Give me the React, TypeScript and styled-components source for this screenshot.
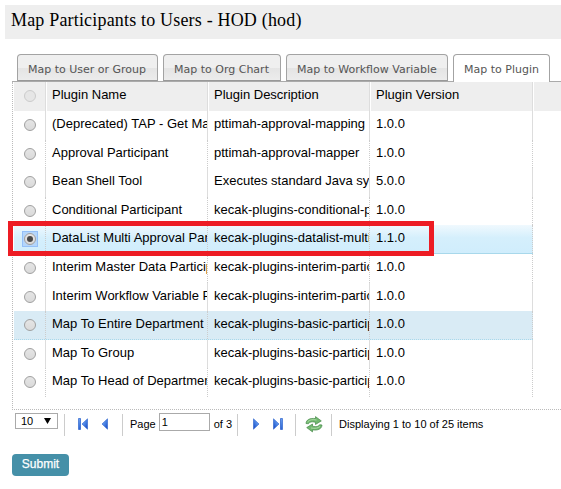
import React from "react";
import styled, { createGlobalStyle, css } from "styled-components";

const GlobalStyle = createGlobalStyle`
  * { box-sizing: border-box; }
  body { margin: 0; background: #fff; overflow: hidden; }
`;

const Page = styled.main`
  width: 561px;
  height: 489px;
  padding-top: 5px;
  background: #fff;
  color: #000;
  font-family: "Liberation Sans", Arial, sans-serif;
  overflow: hidden;
`;

const TitleBar = styled.header`
  height: 34px;
  margin-left: 5px;
  padding-left: 6px;
  background: #eee;
`;

const Title = styled.h1`
  margin: 0;
  font: 400 18px/31px "Liberation Serif", serif;
  letter-spacing: 0.18px;
  white-space: nowrap;
`;

const Tabs = styled.nav`
  display: flex;
  gap: 5px;
  height: 28px;
  margin: 15px 0 0 12px;
  padding-left: 5px;
  border-bottom: 1px solid #aaa;
`;

const Tab = styled.a<{ $width: number; $active?: boolean }>`
  width: ${(p) => p.$width}px;
  height: ${(p) => (p.$active ? 28 : 27)}px;
  padding-left: 10px;
  border: 1px solid #a3a3a3;
  border-bottom: ${(p) => (p.$active ? "0" : "1px solid #999")};
  border-radius: 4px 4px 0 0;
  background: ${(p) =>
    p.$active ? "#fff" : "linear-gradient(#efefef 0 50%, #e4e4e4 52%, #ececec)"};
  color: #555;
  font: 11px/29px "DejaVu Sans", Verdana, sans-serif;
  white-space: nowrap;
`;

const Grid = styled.section`
  position: relative;
  height: 328px;
  margin-left: 12px;
  border-left: 1px dotted #bbb;
  border-bottom: 1px dotted #bbb;
`;

const columns = css`
  display: grid;
  grid-template-columns: 32px 162px 162px 163px 1fr;
`;

const HeaderRow = styled.div`
  ${columns}
  height: 29px;
  margin-left: 1px;
  background: #eee;
`;

const HeaderCell = styled.div`
  padding-left: 6px;
  border-right: 1px solid #ddd;
  box-shadow: 1px 0 #fff;
  font-size: 13px;
  line-height: 26px;
  white-space: nowrap;
  &:last-child { border: 0; }
`;

type Tone = "plain" | "hover" | "selected";

const Row = styled.div<{ $tone: Tone }>`
  ${columns}
  width: 519px;
  height: 28.6px;
  margin-left: 1px;
  grid-template-columns: 32px 162px 162px 163px;
  ${(p) =>
    p.$tone === "hover" &&
    css`background: #d9ebf5; border-bottom: 1px dotted #a8d8eb;`}
  ${(p) =>
    p.$tone === "selected" &&
    css`background: linear-gradient(#f0f9fe, #d5effc 45%, #d0edfc); border-bottom: 1px solid #a8d8eb;`}
`;

const Cell = styled.div<{ $solid: boolean }>`
  padding-left: 6px;
  border-right: 1px ${(p) => (p.$solid ? "solid #ddd" : "dotted #ccc")};
  font-size: 13px;
  line-height: 26px;
  white-space: nowrap;
  overflow: hidden;
`;

const Radio = styled.span<{ $checked?: boolean; $faded?: boolean }>`
  display: flex;
  align-items: center;
  justify-content: center;
  width: 12px;
  height: 12px;
  margin: 8px 0 0 4px;
  border: 1px solid ${(p) => (p.$faded ? "#ccc" : "#a0a0a0")};
  border-radius: 50%;
  background: ${(p) => (p.$faded ? "#e6e6e6" : "linear-gradient(#e5e5e5, #dadada)")};
  ${(p) =>
    p.$checked &&
    css`
      &::after {
        content: "";
        width: 6px;
        height: 6px;
        border-radius: 50%;
        background: #484848;
      }
    `}
`;

const FocusRing = styled.span`
  display: flex;
  align-items: center;
  justify-content: center;
  width: 14px;
  height: 14px;
  margin: 7px 0 0 3px;
  background: #b4d6fb;
  box-shadow: 0 0 0 1px #94c0f8;
  ${Radio} {
    margin: 0;
  }
`;

const Highlight = styled.div`
  position: absolute;
  left: -5px;
  top: 139px;
  width: 426px;
  height: 35px;
  border: 5px solid #ed1c24;
`;

const Pager = styled.footer`
  display: flex;
  align-items: flex-start;
  height: 44px;
  margin-left: 15px;
  padding-top: 3px;
  font-size: 11px;
`;

const PageSize = styled.div`
  display: flex;
  justify-content: space-between;
  align-items: center;
  width: 43px;
  height: 16px;
  padding: 0 6px 0 5px;
  border: 1px solid #aaa;
`;

const Divider = styled.i<{ $before: number; $after: number }>`
  width: 1px;
  height: 22px;
  margin: 1px ${(p) => p.$after}px 0 ${(p) => p.$before}px;
  background: #ccc;
`;

const Icon = styled.svg<{ $gap?: number }>`
  flex: none;
  margin-top: 5px;
  margin-right: ${(p) => p.$gap ?? 0}px;
`;

const RefreshIcon = styled(Icon)`
  margin-top: 3px;
`;

const PagerText = styled.span`
  line-height: 22px;
  white-space: nowrap;
`;

const PageInput = styled.div`
  width: 51px;
  height: 18px;
  margin: 0 4px 0 3px;
  padding-left: 2px;
  border: 1px solid #aaa;
  line-height: 17px;
`;

const Submit = styled.button`
  display: block;
  width: 57px;
  height: 22px;
  margin-left: 12px;
  padding: 0 0 2px;
  border: 0;
  border-radius: 4px;
  background: #4590a8;
  color: #fff;
  font: 12px "Liberation Sans", Arial, sans-serif;
  -webkit-text-stroke: 0.25px #fff;
`;

const tabs = [
  { label: "Map to User or Group", width: 141 },
  { label: "Map to Org Chart", width: 118 },
  { label: "Map to Workflow Variable", width: 162 },
  { label: "Map to Plugin", width: 97, active: true },
];

const plugins: { name: string; description: string; version: string; tone?: Tone }[] = [
  { name: "(Deprecated) TAP - Get Mapping", description: "pttimah-approval-mapping", version: "1.0.0" },
  { name: "Approval Participant", description: "pttimah-approval-mapper", version: "1.0.0" },
  { name: "Bean Shell Tool", description: "Executes standard Java syntax", version: "5.0.0" },
  { name: "Conditional Participant", description: "kecak-plugins-conditional-participant", version: "1.0.0" },
  { name: "DataList Multi Approval Participant", description: "kecak-plugins-datalist-multi-approval", version: "1.1.0", tone: "selected" },
  { name: "Interim Master Data Participant", description: "kecak-plugins-interim-participant", version: "1.0.0" },
  { name: "Interim Workflow Variable Participant", description: "kecak-plugins-interim-participant", version: "1.0.0" },
  { name: "Map To Entire Department", description: "kecak-plugins-basic-participant", version: "1.0.0", tone: "hover" },
  { name: "Map To Group", description: "kecak-plugins-basic-participant", version: "1.0.0" },
  { name: "Map To Head of Department", description: "kecak-plugins-basic-participant", version: "1.0.0" },
];

function Arrow({ flip, bar, gap }: { flip?: boolean; bar?: boolean; gap?: number }) {
  return (
    <Icon width="12" height="12" viewBox="0 0 12 12" $gap={gap}>
      <defs>
        <linearGradient id="blue" x2="1" y2="1">
          <stop stopColor="#94bfff" />
          <stop offset=".55" stopColor="#427ce0" />
          <stop offset="1" stopColor="#123fc0" />
        </linearGradient>
      </defs>
      <g transform={flip ? "translate(12 0) scale(-1 1)" : undefined}>
        {bar && <path d="M1.5.5h2v11h-2z" fill="url(#blue)" stroke="#2860cb" strokeWidth=".7" />}
        <path d="M10.5.8v10.4L5 6z" fill="url(#blue)" stroke="#2860cb" strokeWidth=".6" />
      </g>
    </Icon>
  );
}

function Refresh() {
  return (
    <RefreshIcon width="18" height="17" viewBox="0 0 18 17">
      <g fill="#71b86f" stroke="#47894a" strokeWidth=".7" strokeLinejoin="round">
        <path d="M1 7.5C1.2 3.8 4.8 1.8 10.5 2.6V.6l5.8 4.3-5.8 3.6V6.3C6.8 5.3 4.6 5.8 3.4 7.8z" />
        <path d="M17 9c-.2 3.7-3.8 5.7-9.5 4.9v2L1.7 11.6 7.5 8v2.2c3.7 1 5.9.5 7.1-1.5z" />
      </g>
      <path d="M2.5 6C4.5 3.5 7.5 3.3 11.5 4M6 12c4 .8 7 .2 9-1.5" fill="none" stroke="#acdba5" />
    </RefreshIcon>
  );
}

export default function App() {
  return (
    <Page>
      <GlobalStyle />
      <TitleBar><Title>Map Participants to Users - HOD (hod)</Title></TitleBar>
      <Tabs>
        {tabs.map((tab) => (
          <Tab key={tab.label} $width={tab.width} $active={tab.active}>{tab.label}</Tab>
        ))}
      </Tabs>
      <Grid>
        <HeaderRow>
          <HeaderCell><Radio $faded /></HeaderCell>
          <HeaderCell>Plugin Name</HeaderCell>
          <HeaderCell>Plugin Description</HeaderCell>
          <HeaderCell>Plugin Version</HeaderCell>
          <HeaderCell />
        </HeaderRow>
        {plugins.map((plugin, index) => {
          const tone = plugin.tone ?? "plain";
          const solid = index % 2 === 0 && tone === "plain";
          return (
            <Row key={plugin.name} $tone={tone}>
              <Cell $solid={solid}>
                {tone === "selected" ? <FocusRing><Radio $checked /></FocusRing> : <Radio />}
              </Cell>
              <Cell $solid={solid}>{plugin.name}</Cell>
              <Cell $solid={solid}>{plugin.description}</Cell>
              <Cell $solid={solid}>{plugin.version}</Cell>
            </Row>
          );
        })}
        <Highlight />
      </Grid>
      <Pager>
        <PageSize>
          <span>10</span>
          <svg width="7" height="6" viewBox="0 0 7 6"><path d="M0 0h7L3.5 6z" /></svg>
        </PageSize>
        <Divider $before={6} $after={12} />
        <Arrow bar gap={8} />
        <Arrow />
        <Divider $before={13} $after={7} />
        <PagerText>Page</PagerText>
        <PageInput>1</PageInput>
        <PagerText>of 3</PagerText>
        <Divider $before={5} $after={14} />
        <Arrow flip gap={8} />
        <Arrow flip bar />
        <Divider $before={11} $after={9} />
        <Refresh />
        <Divider $before={8} $after={7} />
        <PagerText>Displaying 1 to 10 of 25 items</PagerText>
      </Pager>
      <Submit>Submit</Submit>
    </Page>
  );
}
